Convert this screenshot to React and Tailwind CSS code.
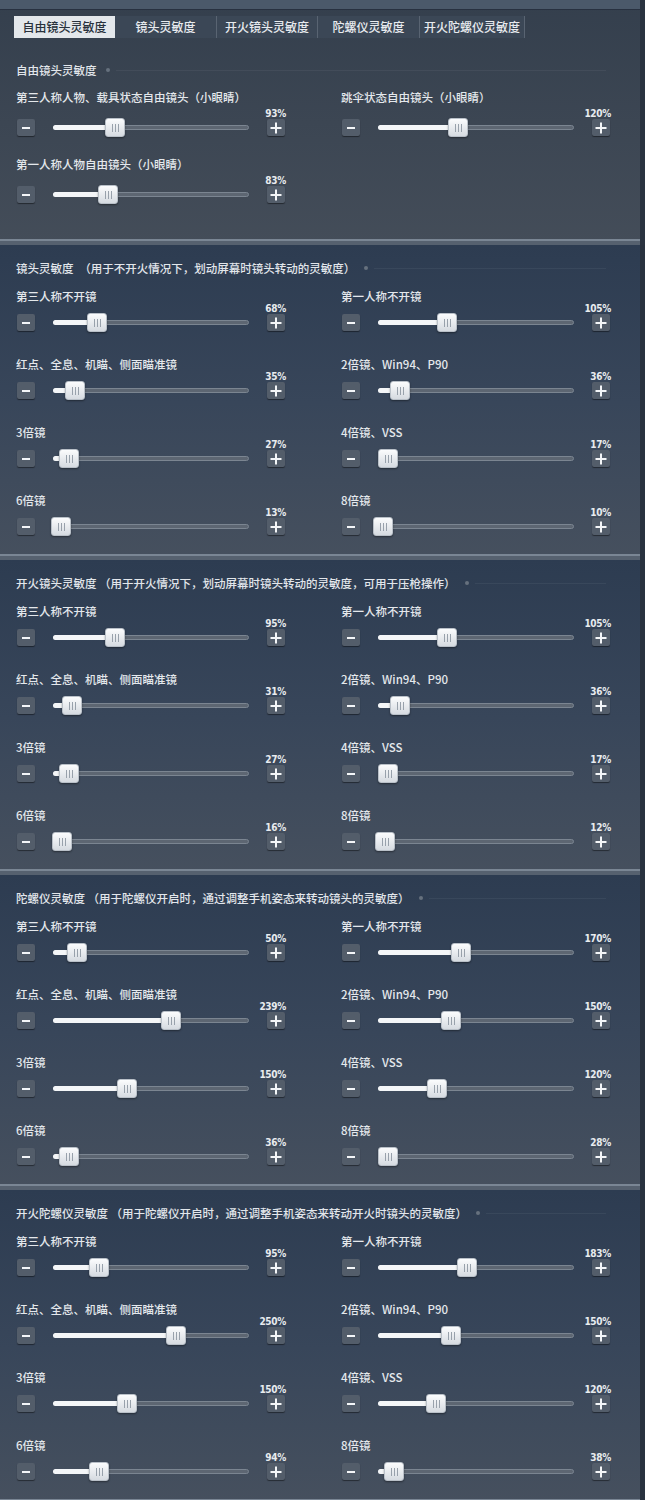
import React from 'react';

const tabs = ['自由镜头灵敏度', '镜头灵敏度', '开火镜头灵敏度', '陀螺仪灵敏度', '开火陀螺仪灵敏度'];
const tabWidths = ['w-[101px]', 'w-[102px]', 'w-[101px]', 'w-[102px]', 'w-[105px]'];

// pos = thumb centre, in px from the left end of the 196px track
const scopes = ['第三人称不开镜', '第一人称不开镜', '红点、全息、机瞄、侧面瞄准镜', '2倍镜、Win94、P90', '3倍镜', '4倍镜、VSS', '6倍镜', '8倍镜'];

const withScopes = (values) => values.map(([value, pos], i) => ({ label: scopes[i], value, pos }));

const freeLook = [
  { label: '第三人称人物、载具状态自由镜头（小眼睛）', value: '93%', pos: 62 },
  { label: '跳伞状态自由镜头（小眼睛）', value: '120%', pos: 80 },
  { label: '第一人称人物自由镜头（小眼睛）', value: '83%', pos: 55 },
];

const sections = [
  {
    title: '镜头灵敏度　（用于不开火情况下，划动屏幕时镜头转动的灵敏度）',
    items: withScopes([['68%', 44], ['105%', 69], ['35%', 22], ['36%', 22], ['27%', 16], ['17%', 10], ['13%', 8], ['10%', 5]]),
  },
  {
    title: '开火镜头灵敏度 （用于开火情况下，划动屏幕时镜头转动的灵敏度，可用于压枪操作）',
    items: withScopes([['95%', 62], ['105%', 69], ['31%', 19], ['36%', 22], ['27%', 16], ['17%', 10], ['16%', 9], ['12%', 7]]),
  },
  {
    title: '陀螺仪灵敏度 （用于陀螺仪开启时，通过调整手机姿态来转动镜头的灵敏度）',
    items: withScopes([['50%', 24], ['170%', 83], ['239%', 118], ['150%', 73], ['150%', 74], ['120%', 59], ['36%', 16], ['28%', 10]]),
  },
  {
    title: '开火陀螺仪灵敏度 （用于陀螺仪开启时，通过调整手机姿态来转动开火时镜头的灵敏度）',
    items: withScopes([['95%', 46], ['183%', 89], ['250%', 123], ['150%', 73], ['150%', 74], ['120%', 58], ['94%', 46], ['38%', 16]]),
  },
];

const cjk = { fontFamily: '"Noto Sans CJK SC", "Noto Sans", sans-serif' };
const digits = { fontFamily: '"DejaVu Sans Condensed", "Liberation Sans", sans-serif' };

const StepButton = ({ plus }) => (
  <div className="w-[18px] h-[17px] rounded-[2px] bg-[#535d6a] shadow-[0_1px_1px_rgba(0,0,0,0.45)] flex items-center justify-center shrink-0">
    <svg width="12" height="12" viewBox="0 0 12 12">
      <rect x={plus ? 0.5 : 2} y="5" width={plus ? 11 : 8} height="2" fill="#f4f6f8" />
      {plus && <rect x="5" y="0.5" width="2" height="11" fill="#f4f6f8" />}
    </svg>
  </div>
);

const Slider = ({ label, value, pos, lift }) => (
  <div>
    <div className="text-[11.5px] leading-[14px] font-medium text-[#e4e8ec] whitespace-nowrap" style={cjk}>
      {label}
    </div>
    <div className={`flex items-end ${lift}`}>
      <div className="ml-[1px]">
        <StepButton />
      </div>
      <div className="relative mx-[18px] w-[196px] h-[17px] flex items-center shrink-0">
        <div className="w-full h-[5px] rounded-full bg-[#5d6672] border border-[#7b8591]" />
        <div className="absolute left-0 h-[5px] rounded-l-full bg-[#f4f6f8]" style={{ width: pos }} />
        <div
          className="absolute top-[-1px] w-[20px] h-[19px] rounded-[3px] bg-linear-to-b from-[#fbfcfd] to-[#d6dbe1] border border-[#b9c0c8] shadow-[0_1px_2px_rgba(0,0,0,0.4)] flex items-center justify-center gap-[2px]"
          style={{ left: pos - 10 }}
        >
          <span className="w-px h-[8px] bg-[#98a1ab]" />
          <span className="w-px h-[8px] bg-[#98a1ab]" />
          <span className="w-px h-[8px] bg-[#98a1ab]" />
        </div>
      </div>
      <div className="w-[18px] flex flex-col items-end">
        <span className="text-[10px] leading-[11px] font-bold text-[#e8ebef] tracking-[-0.3px] -mr-[1px] whitespace-nowrap" style={digits}>
          {value}
        </span>
        <StepButton plus />
      </div>
    </div>
  </div>
);

const SectionTitle = ({ children }) => (
  <div className="flex items-center pr-[34px]">
    <span className="text-[11.5px] leading-[14px] font-medium text-[#e2e6eb] whitespace-nowrap" style={cjk}>
      {children}
    </span>
    <span className="ml-[9px] w-[4px] h-[4px] rounded-full bg-[#66717e] shrink-0" />
    <span className="ml-[6px] flex-1 h-px bg-white/5" />
  </div>
);

const Divider = () => (
  <div className="h-[6px] flex flex-col">
    <div className="h-[2px] bg-[#7a8694]" />
    <div className="flex-1 bg-[#56616f]" />
  </div>
);

const Grid = ({ items, rowGap, lift = '' }) => (
  <div className={`grid grid-cols-[271px_271px] gap-x-[54px] ${rowGap}`}>
    {items.map((item, i) => (
      <Slider key={i} lift={lift} {...item} />
    ))}
  </div>
);

export default function App() {
  return (
    <div className="w-[645px] bg-[#303c4b] overflow-hidden">
      {/* free look tab */}
      <div className="bg-linear-to-b from-[#343f4d] to-[#444d59] border-r-[5px] border-[#2a3340]">
        <div className="h-[10px] bg-[#4b596a] border-b border-[#283140]" />
        <div className="flex ml-[14px] mt-[6px] h-[22px]">
          {tabs.map((t, i) => (
            <div
              key={t}
              className={`${tabWidths[i]} flex items-center justify-center text-[12px] font-medium whitespace-nowrap ${
                i === 0
                  ? 'bg-[#e3e7eb] text-[#28313c]'
                  : 'bg-[#3b4756] text-[#e7eaee] border-r border-[#596472]'
              }`}
              style={cjk}
            >
              {t}
            </div>
          ))}
        </div>
        <div className="pl-4 pt-[25px] pb-[36px]">
          <SectionTitle>自由镜头灵敏度</SectionTitle>
          <div className="mt-[13px]">
            <Grid items={freeLook} rowGap="gap-y-[21px]" lift="mt-[4px]" />
          </div>
        </div>
        <Divider />
      </div>

      {sections.map((s) => (
        <div key={s.title} className="bg-linear-to-b from-[#2d3c51] via-[#38465a] to-[#46505e] border-r-[5px] border-[#29323f]">
          <div className="pl-4 pt-4 pb-[19px]">
            <SectionTitle>{s.title}</SectionTitle>
            <div className="mt-[14px]">
              <Grid items={s.items} rowGap="gap-y-[26px]" />
            </div>
          </div>
          <Divider />
        </div>
      ))}
    </div>
  );
}
